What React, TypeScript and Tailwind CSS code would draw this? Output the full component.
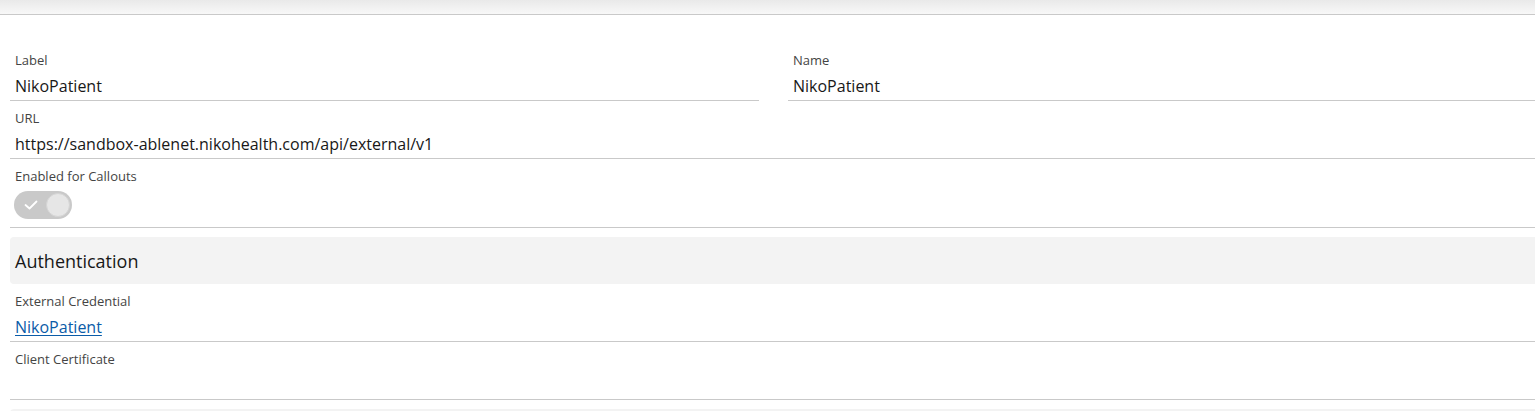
import React from "react";

const font = { fontFamily: '"Open Sans", "Noto Sans", sans-serif' };

const Field = ({ label, children }: { label: string; children?: React.ReactNode }) => (
  <div className="border-b border-[#c9c9c9] pl-[5px] pt-[9px] pb-[2px]">
    <div className="text-[13px] leading-[16px] text-[#444444]">{label}</div>
    <div className="mt-[6px] h-[24px] text-[16px] leading-[24px] text-[#181818]">{children}</div>
  </div>
);

const App = () => {
  return (
    <div className="w-[1535px] h-[411px] overflow-hidden bg-white" style={font}>
      <div className="h-[15px] border-b border-[#c9c9c9] bg-gradient-to-b from-[#e9e9e9] to-[#f8f8f8]" />
      <div className="pl-[10px] pt-[28px]">
        <div className="grid grid-cols-[749px_1fr] gap-x-[29px]">
          <Field label="Label">NikoPatient</Field>
          <Field label="Name">NikoPatient</Field>
        </div>
        <Field label="URL">https://sandbox-ablenet.nikohealth.com/api/external/v1</Field>
        <div className="border-b border-[#c9c9c9] pl-[4px] pt-[9px] pb-[8px]">
          <div className="pl-[1px] text-[13px] leading-[16px] text-[#444444]">Enabled for Callouts</div>
          <div className="mt-[7px] flex h-[28px] w-[58px] items-center justify-between rounded-full bg-[#c9c9c9] pl-[10px] pr-[2px]">
            <svg width="14" height="10" viewBox="0 0 14 10" fill="none">
              <path d="M1.5 5 L5.5 8.5 L12.5 1.5" stroke="#ffffff" strokeWidth="1.8" strokeLinecap="round" strokeLinejoin="round" />
            </svg>
            <div className="h-[24px] w-[24px] rounded-full border border-[#d4d4d4] bg-[#e6e6e6]" />
          </div>
        </div>
        <div className="mt-[9px] flex h-[47px] items-center rounded-l-[4px] bg-[#f3f3f3] pl-[5px] text-[18px] text-[#181818]">
          <span className="translate-y-[1px]">Authentication</span>
        </div>
        <Field label="External Credential">
          <a className="text-[#0b5ca8] underline underline-offset-2 decoration-1">NikoPatient</a>
        </Field>
        <Field label="Client Certificate" />
        <div className="mt-[9px] h-[20px] rounded-l-[4px] bg-[#f3f3f3]" />
      </div>
    </div>
  );
};

export default App;
